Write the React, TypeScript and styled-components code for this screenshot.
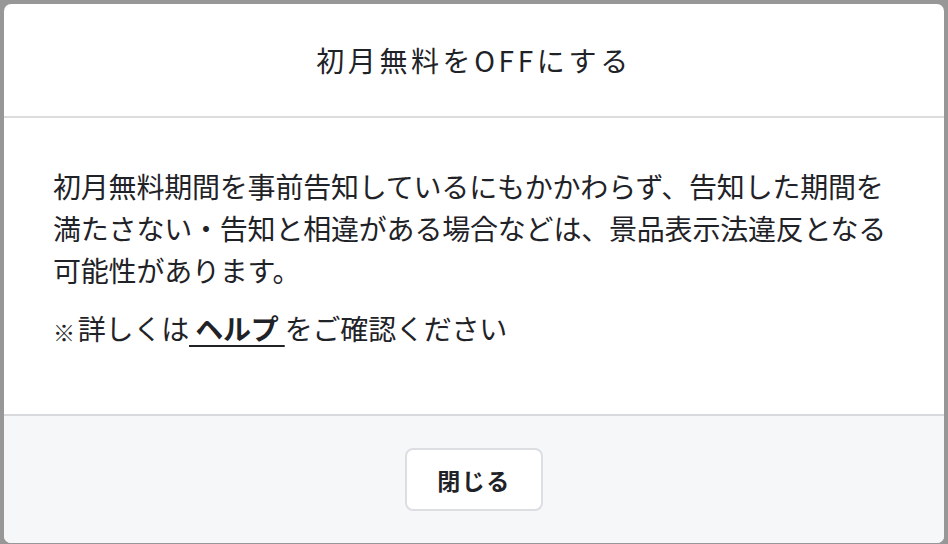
import React from "react";
import styled, { createGlobalStyle } from "styled-components";

const GlobalStyle = createGlobalStyle`
  html, body {
    margin: 0;
    padding: 0;
  }
  body {
    font-family: "Noto Sans CJK JP", "Noto Sans", sans-serif;
    color: #1f2328;
  }
`;

const Overlay = styled.div`
  box-sizing: border-box;
  width: 948px;
  height: 544px;
  padding: 4px 4px 1px 4px;
  background: #979797;
  display: flex;
`;

const Modal = styled.div`
  flex: 1;
  display: flex;
  flex-direction: column;
  background: #ffffff;
  border-radius: 7px;
  overflow: hidden;
`;

const Header = styled.div`
  height: 112px;
  flex-shrink: 0;
  display: flex;
  align-items: center;
  justify-content: center;
  border-bottom: 2px solid #dcdcdc;
`;

const Title = styled.h2`
  margin: 0;
  font-size: 28px;
  font-weight: 400;
  letter-spacing: 3.6px;
  color: #1f2328;
`;

const Body = styled.div`
  flex: 1;
  padding: 47px 20px 0 49px;
`;

const Paragraph = styled.p<{ $gap?: number }>`
  margin: ${p => p.$gap ?? 0}px 0 0;
  font-size: 28px;
  line-height: 42px;
  letter-spacing: -0.2px;
  white-space: nowrap;
  color: #1f2328;
`;

const Note = styled.span`
  font-size: 22px;
  margin-right: 3px;
  vertical-align: -1px;
`;

const HelpLink = styled.a`
  color: #1f2328;
  font-weight: 700;
  text-decoration: underline;
  text-decoration-thickness: 2px;
  text-underline-offset: 5px;
  white-space: pre;
`;

const Footer = styled.div`
  flex-shrink: 0;
  height: 127px;
  box-sizing: content-box;
  border-top: 2px solid #d8d9dc;
  background: #f6f7f9;
  display: flex;
  align-items: center;
  justify-content: center;
`;

const Button = styled.button`
  box-sizing: border-box;
  width: 138px;
  height: 63px;
  background: #ffffff;
  border: 2px solid #dcdee2;
  border-radius: 8px;
  font-family: "Noto Sans CJK JP", "Noto Sans", sans-serif;
  font-size: 23px;
  font-weight: 700;
  letter-spacing: 1.5px;
  color: #1f2328;
  cursor: pointer;
`;

export default function App() {
  return (
    <>
      <GlobalStyle />
      <Overlay>
        <Modal>
          <Header>
            <Title>初月無料をOFFにする</Title>
          </Header>
          <Body>
            <Paragraph>
              初月無料期間を事前告知しているにもかかわらず、告知した期間を
              <br />
              満たさない・告知と相違がある場合などは、景品表示法違反となる
              <br />
              可能性があります。
            </Paragraph>
            <Paragraph $gap={16}>
              <Note>※</Note>詳しくは<HelpLink href="#"> ヘルプ </HelpLink>をご確認ください
            </Paragraph>
          </Body>
          <Footer>
            <Button>閉じる</Button>
          </Footer>
        </Modal>
      </Overlay>
    </>
  );
}
